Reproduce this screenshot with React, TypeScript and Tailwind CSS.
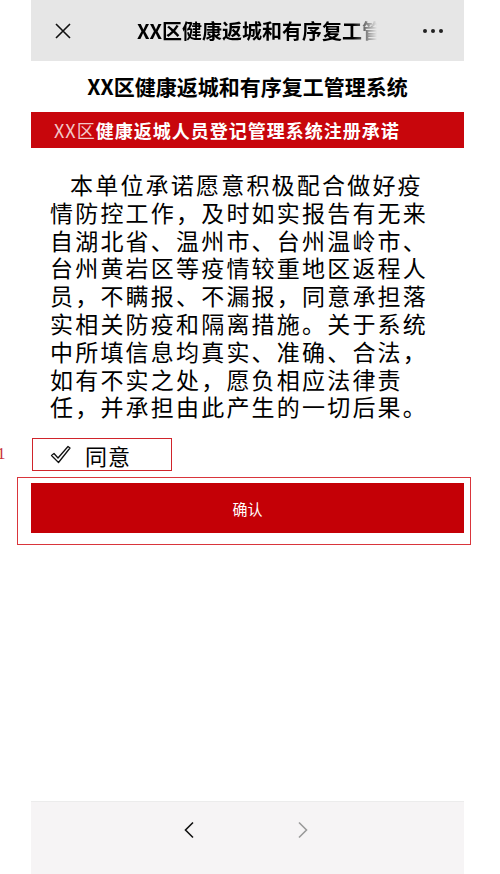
import React from 'react';

const lines = [
  '本单位承诺愿意积极配合做好疫',
  '情防控工作，及时如实报告有无来',
  '自湖北省、温州市、台州温岭市、',
  '台州黄岩区等疫情较重地区返程人',
  '员，不瞒报、不漏报，同意承担落',
  '实相关防疫和隔离措施。关于系统',
  '中所填信息均真实、准确、合法，',
  '如有不实之处，愿负相应法律责',
  '任，并承担由此产生的一切后果。',
];

export default function App() {
  return (
    <div
      className="relative w-[500px] h-[874px] bg-white flex flex-col overflow-hidden text-black"
      style={{ fontFamily: '"Noto Sans CJK SC", "Noto Sans", sans-serif' }}
    >
      {/* Top bar */}
      <div className="ml-[31px] w-[433px] h-[61px] bg-[#e6e6e6] flex items-center shrink-0">
        <svg className="ml-[23px] w-[18px] h-[18px]" viewBox="0 0 18 18" fill="none" stroke="#111" strokeWidth="1.6">
          <path d="M2 2 L16 16 M16 2 L2 16" />
        </svg>
        <div className="ml-[65px] w-[240px] overflow-hidden whitespace-nowrap text-[20px] font-bold leading-[24px] [mask-image:linear-gradient(to_right,black_90%,transparent_100%)]">
          XX区健康返城和有序复工管理系统
        </div>
        <div className="ml-auto mr-[21px] flex gap-[4px]">
          <span className="w-[4px] h-[4px] rounded-full bg-[#222]" />
          <span className="w-[4px] h-[4px] rounded-full bg-[#222]" />
          <span className="w-[4px] h-[4px] rounded-full bg-[#222]" />
        </div>
      </div>

      {/* Title */}
      <div className="ml-[31px] w-[433px] h-[51px] flex items-center justify-center text-[21px] font-bold leading-none shrink-0">
        XX区健康返城和有序复工管理系统
      </div>

      {/* Red banner */}
      <div className="ml-[31px] w-[433px] h-[36px] bg-[#c8060c] flex items-center pl-[23px] text-[18px] tracking-[1px] leading-none shrink-0">
        <span className="font-normal text-[#f3c7c7]">XX区</span>
        <span className="font-bold text-white">健康返城人员登记管理系统注册承诺</span>
      </div>

      {/* Body */}
      <div className="ml-[50px] pt-[23px] text-[23px] leading-[27.8px] tracking-[2.2px] shrink-0">
        {lines.map((l, i) => (
          <div key={i} className={i === 0 ? 'pl-[20px] whitespace-nowrap' : 'whitespace-nowrap'}>
            {l}
          </div>
        ))}
      </div>

      {/* Agree row */}
      <div className="relative mt-[17px] shrink-0">
        <span
          className="absolute left-[-3px] top-[7px] text-[17px] text-[#c8333a] leading-none"
          style={{ fontFamily: '"Liberation Serif", serif' }}
        >
          1
        </span>
        <div className="ml-[32px] w-[140px] h-[33px] border border-[#d0242b] flex items-end pb-[1px]">
          <svg className="ml-[17px] mb-[5px] w-[21px] h-[19px]" viewBox="0 0 21 19" fill="none" stroke="#111" strokeWidth="1.3" strokeLinejoin="round">
            <path d="M1.5 10.5 L4 8.5 L8 13 L18 1.5 L20 3 L8.5 17.5 Z" />
          </svg>
          <span className="ml-[14px] text-[22px] tracking-[1px] leading-[28px]">同意</span>
        </div>
      </div>

      {/* Confirm */}
      <div className="mt-[6px] ml-[17px] w-[454px] h-[68px] border border-[#d9353b] pt-[5px] pl-[13px] pr-[6px] shrink-0">
        <button className="w-full h-[50px] bg-[#c40006] text-white text-[15px] leading-none flex items-center justify-center">
          确认
        </button>
      </div>

      <div className="flex-1" />

      {/* Bottom nav */}
      <div className="ml-[31px] w-[433px] h-[73px] bg-[#f6f4f5] border-t border-[#ececec] flex items-start pt-[19px] shrink-0">
        <svg className="ml-[152px] w-[12px] h-[18px]" viewBox="0 0 12 18" fill="none" stroke="#111" strokeWidth="1.6">
          <path d="M10 1.5 L2.5 9 L10 16.5" />
        </svg>
        <svg className="ml-[102px] w-[12px] h-[18px]" viewBox="0 0 12 18" fill="none" stroke="#9a9a9a" strokeWidth="1.6">
          <path d="M2 1.5 L9.5 9 L2 16.5" />
        </svg>
      </div>
    </div>
  );
}
